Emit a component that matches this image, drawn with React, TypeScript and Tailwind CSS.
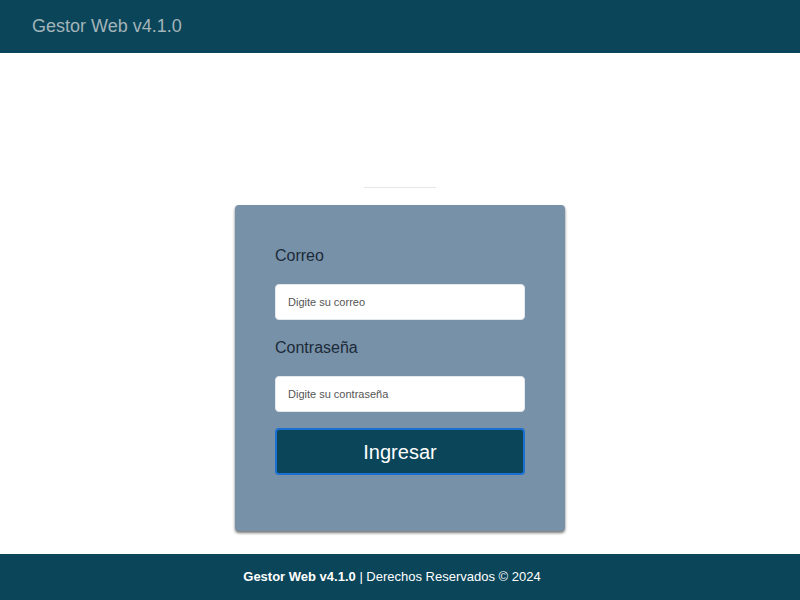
export default function App() {
  return (
    <div className="flex min-h-[600px] flex-col bg-white font-['Liberation_Sans',Arial,sans-serif]">
      <header className="flex h-[53px] items-center bg-[#0b4559] px-8">
        <span className="text-[18px] text-[#a3b4ba]">Gestor Web v4.1.0</span>
      </header>

      <main className="flex flex-1 flex-col items-center pt-[134px]">
        <hr className="w-[72px] border-t border-[#e5e7eb]" />
        <form
          className="mt-[17px] flex w-[330px] flex-col rounded-[4px] bg-[#7691a8] px-10 pb-[56px] pt-[39px] shadow-[0_2px_3px_rgba(0,0,0,0.55)]"
          onSubmit={(e) => e.preventDefault()}
        >
          <label htmlFor="correo" className="text-[16px] leading-6 text-[#1d2a38]">
            Correo
          </label>
          <input
            id="correo"
            placeholder="Digite su correo"
            className="mt-4 h-9 w-full rounded-[4px] border border-[#e3e8ec] bg-white px-3 text-[11px] text-[#333] outline-none placeholder:text-[#555]"
          />
          <label htmlFor="clave" className="mt-4 text-[16px] leading-6 text-[#1d2a38]">
            Contraseña
          </label>
          <input
            id="clave"
            type="password"
            placeholder="Digite su contraseña"
            className="mt-4 h-9 w-full rounded-[4px] border border-[#e3e8ec] bg-white px-3 text-[11px] text-[#333] outline-none placeholder:text-[#555]"
          />
          <button
            type="submit"
            className="mt-4 h-[47px] w-full rounded-[4px] border-2 border-[#1b6fd0] bg-[#0b4559] text-[20px] text-white"
          >
            Ingresar
          </button>
        </form>
      </main>

      <footer className="flex h-[46px] items-center justify-center bg-[#0b4559] pr-4 text-[13px] text-white">
        <span>
          <b>Gestor Web v4.1.0</b> | Derechos Reservados © 2024
        </span>
      </footer>
    </div>
  )
}
